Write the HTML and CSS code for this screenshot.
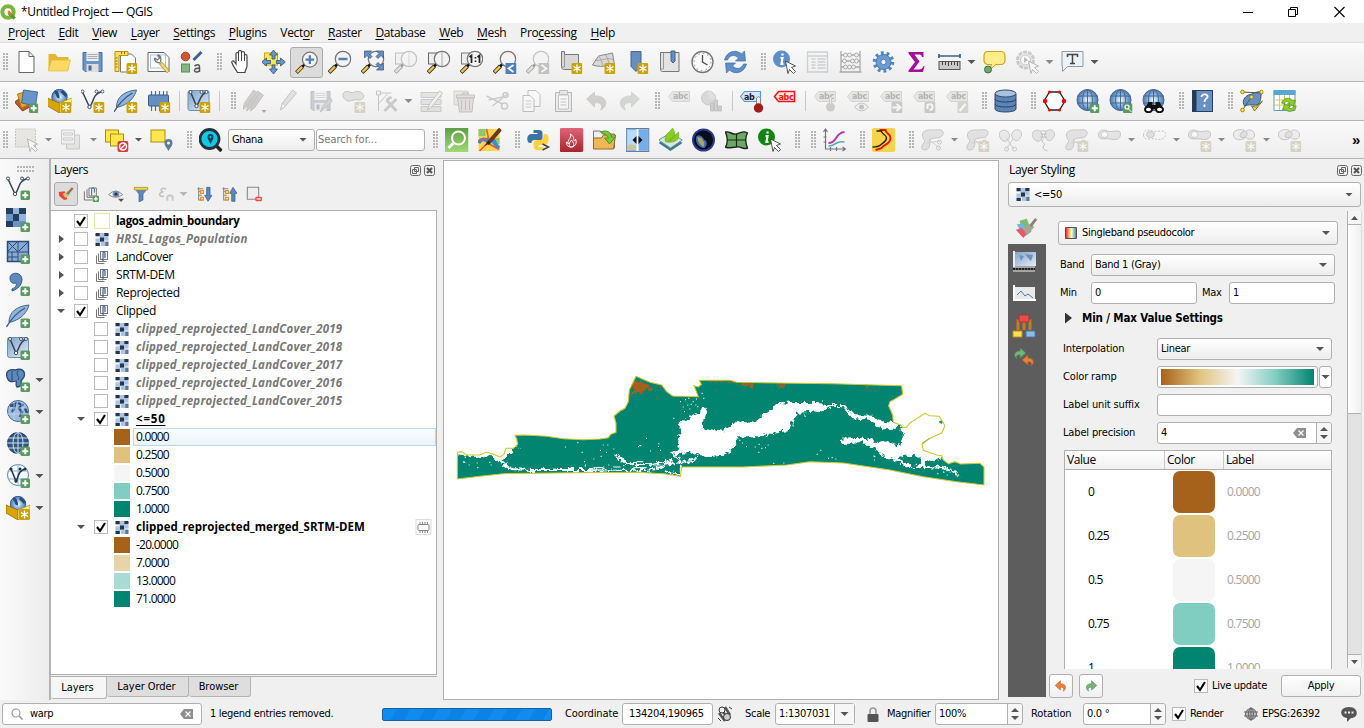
FILE: index.html
```html
<!DOCTYPE html>
<html lang="en">
<head>
<meta charset="utf-8">
<title>*Untitled Project — QGIS</title>
<link rel="stylesheet" href="styles.css">
</head>
<body>
<svg class="defs" aria-hidden="true">
<defs>
<linearGradient id="ramp5"><stop offset="0" stop-color="#d7191c"/><stop offset=".3" stop-color="#fdae61"/><stop offset=".55" stop-color="#ffffbf"/><stop offset="1" stop-color="#2b83ba"/></linearGradient>
<linearGradient id="paleblue" x2="1" y2="1"><stop offset="0" stop-color="#7da3cc"/><stop offset="1" stop-color="#e3edf8"/></linearGradient>
<linearGradient id="green" x2="0" y2="1"><stop offset="0" stop-color="#5f9f45"/><stop offset="1" stop-color="#9ed977"/></linearGradient>
<linearGradient id="red" x2="0" y2="1"><stop offset="0" stop-color="#e0647a"/><stop offset="1" stop-color="#a8262a"/></linearGradient>
<radialGradient id="ball"><stop offset="0" stop-color="#fff"/><stop offset=".5" stop-color="#8fb6de"/><stop offset="1" stop-color="#4a7ab3"/></radialGradient>
</defs>
<symbol id="star" viewBox="0 0 24 24"><rect x="13" y="13" width="11" height="11" rx="1.5" fill="#c8a30a"/><path d="M18.500 14.500v8M15 16.500l7 4M22 16.500l-7 4" stroke="#fff" stroke-width="1.300"/></symbol>
<symbol id="plus" viewBox="0 0 24 24"><rect x="14.500" y="14.500" width="9.500" height="9.500" rx="1.500" fill="#5b9a5f"/><path d="M19.250 16.300v6M16.250 19.250h6" stroke="#fff" stroke-width="1.900"/></symbol>
<symbol id="lens" viewBox="0 0 24 24"><path d="M1.500 22.500L8 16" stroke="#333" stroke-width="4"/><path d="M2 22l6-6" stroke="#f5c542" stroke-width="2.400"/><path d="M7.500 16.500l3-3" stroke="#111" stroke-width="2.500"/><circle cx="15.500" cy="9" r="7.700" fill="#f3f3f3" stroke="#777" stroke-width="1.300"/></symbol>
<symbol id="new" viewBox="0 0 24 24"><path d="M4.500 1.500h10l5 5v16h-15zM14.500 1.500v5h5" fill="#fff" stroke="#666"/></symbol>
<symbol id="open" viewBox="0 0 24 24"><path d="M1 20V4h7l2 3h11v13z" fill="#e6b735"/><path d="M1 20L4 10h19l-3 11H1z" fill="#fcd865" stroke="#e0b13a" stroke-width=".6"/></symbol>
<symbol id="save" viewBox="0 0 24 24"><path d="M2.500 2.500h19v19h-17l-2-2z" fill="#6b94c6" stroke="#4a6d99"/><rect x="6" y="2" width="12" height="9" fill="#eee"/><path d="M7 4.500h10M7 6.500h10M7 8.500h10" stroke="#aaa"/><rect x="6" y="14" width="12" height="8" fill="#ddd"/><rect x="8" y="15.500" width="3" height="5" fill="#496b96"/></symbol>
<symbol id="layout" viewBox="0 0 24 24"><path d="M7 4h11l4 4v14H7z" fill="#fff" stroke="#777"/><path d="M1.500 1.500h13v4h-9v16h-4z" fill="#ffe05a" stroke="#b9920e"/><path d="M4 8h-2M4 11h-2M4 14h-2M4 17h-2M8 4V2M11 4V2" stroke="#8d7108"/><use href="#star"/></symbol>
<symbol id="layouts" viewBox="0 0 24 24"><path d="M1.500 2.500h16l5 5v14h-21z" fill="#fff" stroke="#666"/><rect x="4" y="5" width="15" height="13" fill="none" stroke="#a9c2e8"/><path d="M14 13l8 9" stroke="#b59a3e" stroke-width="4"/><path d="M14.500 13.500l7 8" stroke="#f7dc73" stroke-width="2"/><path d="M8 8c0 4 3 5 6 5M11 5c3 0 4 3 3 7M8 8l3 2 2-2-2-3" stroke="#777" fill="#eee" stroke-width="1.300"/></symbol>
<symbol id="style" viewBox="0 0 24 24"><circle cx="6" cy="6.500" r="4.300" fill="#cf5a31" stroke="#a2401e"/><path d="M14 10l8-8" stroke="#3d6390" stroke-width="3"/><rect x="2" y="14" width="8" height="8" fill="#84b784" stroke="#5b8a5e"/><path d="M15 16q5-3 5 1v5M20 18c-6 0-6 4-3 4 2 0 3-1 3-2" fill="none" stroke="#555" stroke-width="1.500"/></symbol>
<symbol id="hand" viewBox="0 0 24 24"><path d="M7.500 14V4c0-2 2.500-2 2.500 0V2c0-2 3-2 3 0v1c0-2 3-2 3 0v3c0-2 2.500-2 2.500 0v10c0 2-2 4-2 6.500H9C7 19 5 17 3.500 13c-.8-2 1.500-3 2.500-1z" fill="#fff" stroke="#444" stroke-width="1.200"/><path d="M10 4v7M13 3v8M16 5v6" stroke="#444"/></symbol>
<symbol id="pansel" viewBox="0 0 24 24"><rect x="3" y="3" width="13" height="12" fill="#ffe64f" stroke="#c9aa13"/><path d="M12 0l4 5h-2.500v4h-3V5H8zM12 24l4-5h-2.500v-4h-3v4H8zM0 12l5-4v2.500h4v3H5V16zM24 12l-5-4v2.500h-4v3h4V16z" fill="#6c95c9" stroke="#32527c" stroke-width=".8"/></symbol>
<symbol id="zin" viewBox="0 0 24 24"><use href="#lens"/><path d="M15.500 4.500v9M11 9h9" stroke="#4f7fb7" stroke-width="2.400"/></symbol>
<symbol id="zout" viewBox="0 0 24 24"><use href="#lens"/><path d="M11 9h9" stroke="#4f7fb7" stroke-width="2.400"/></symbol>
<symbol id="zfull" viewBox="0 0 24 24"><use href="#lens"/><path d="M4 1h7L8.500 3.500l3 3-2 2-3-3L4 8zM23 1h-7l2.500 2.500-3 3 2 2 3-3L23 8zM23 20h-7l2.500-2.500-3-3 2-2 3 3L23 13z" fill="#6590c5" stroke="#315179" stroke-width=".7"/></symbol>
<symbol id="zsel" viewBox="0 0 24 24"><rect x="2" y="3" width="12" height="11" fill="#eee" stroke="#666"/><use href="#lens"/><path d="M15.500 2v14" stroke="#aaa"/></symbol>
<symbol id="zone" viewBox="0 0 24 24"><rect x="2" y="3" width="12" height="11" fill="#eee" stroke="#777"/><use href="#lens"/><path d="M10 7l2-1.500V13M18 7l2-1.500V13M16 7v1.500M16 10.500V12" stroke="#222" stroke-width="1.700" fill="none"/></symbol>
<symbol id="zlast" viewBox="0 0 24 24"><use href="#lens"/><rect x="13" y="13" width="11" height="11" fill="#4f80b7"/><path d="M21 15l-5 3.500 5 3.500" stroke="#fff" stroke-width="1.700" fill="none"/></symbol>
<symbol id="znext" viewBox="0 0 24 24"><use href="#lens"/><rect x="13" y="13" width="11" height="11" fill="#777"/><path d="M16 15l5 3.500-5 3.500" stroke="#fff" stroke-width="1.700" fill="none"/></symbol>
<symbol id="view" viewBox="0 0 24 24"><path d="M3 1.500h3v3h14v15H6c-2 0-3-1-3-3z" fill="#d8d8d8" stroke="#777"/><path d="M6 4v13H3" fill="none" stroke="#999"/><use href="#star"/></symbol>
<symbol id="view3" viewBox="0 0 24 24"><path d="M1 15L7 6l14-3 2 12c-5-2-9 4-22 0z" fill="#d8d8d8" stroke="#888"/><path d="M7 6c4 5 3 8 5 10M14 5c3 3 2 6 4 9M4 10c5 2 13-4 18 0" fill="none" stroke="#aaa"/><use href="#star"/></symbol>
<symbol id="mark" viewBox="0 0 24 24"><path d="M6.500 1.500h10v15l-5 5-5-5z" fill="#668fc0" stroke="#41658f"/><use href="#star"/></symbol>
<symbol id="marks" viewBox="0 0 24 24"><path d="M3 2.500h18.500v19H5c-1.500 0-2-1-2-2z" fill="#e3e3e3" stroke="#777"/><path d="M6 3v16H3" fill="none" stroke="#999"/><path d="M13.500 1h4v10l-2 2-2-2z" fill="#668fc0" stroke="#41658f"/></symbol>
<symbol id="clock" viewBox="0 0 24 24"><circle cx="12" cy="12" r="10.500" fill="#fafafa" stroke="#777" stroke-width="1.400"/><circle cx="12" cy="12" r="8.500" fill="none" stroke="#888" stroke-dasharray="1.500 2.950"/><path d="M12 5v7l5 3" fill="none" stroke="#555" stroke-width="1.400"/></symbol>
<symbol id="refresh" viewBox="0 0 24 24"><path d="M1 10C3 1 13-1 18 4l3-3 1 10H12l3-3C11 4 6 5 4 10zM23 14c-2 9-12 11-17 6l-3 3-1-10h10l-3 3c4 4 9 3 11-2z" fill="#5d8fcb" stroke="#3d6ba4" stroke-width=".7"/></symbol>
<symbol id="cursor" viewBox="0 0 24 24"><path d="M13 11l10 5-4 1.500 4 4-2 2-4-4-1.500 4z" fill="#fff" stroke="#444" stroke-width=".9"/></symbol>
<symbol id="ident" viewBox="0 0 24 24"><circle cx="9" cy="9" r="8.500" fill="#5f8fc9"/><path d="M10 3.500v2M8 8h2l-1 6h2" stroke="#fff" stroke-width="2.200" fill="none"/><use href="#cursor"/></symbol>
<symbol id="gident" viewBox="0 0 24 24"><circle cx="9" cy="9" r="8.500" fill="#108510"/><path d="M10 3.500v2M8 8h2l-1 6h2" stroke="#fff" stroke-width="2.200" fill="none"/><use href="#cursor"/></symbol>
<symbol id="attr" viewBox="0 0 24 24"><path d="M2 2h20v20H2zM2 6h20M6 9h4M12 9h8M6 12h4M12 12h8M6 15h4M12 15h8M6 18h4M12 18h8" fill="#eef3f8" stroke="#8194a8" stroke-width="1.300"/></symbol>
<symbol id="abacus" viewBox="0 0 24 24"><path d="M2.500 1v21M21.500 1v21M2 5h20M2 11h20M2 17h20M1 22h22" fill="none" stroke="#777" stroke-width="1.300"/><g fill="#eee" stroke="#777"><circle cx="7" cy="5" r="2"/><circle cx="11" cy="5" r="2"/><circle cx="18" cy="5" r="2"/><circle cx="6" cy="11" r="2"/><circle cx="14" cy="11" r="2"/><circle cx="18" cy="11" r="2"/><circle cx="7" cy="17" r="2"/><circle cx="11" cy="17" r="2"/><circle cx="15" cy="17" r="2"/></g></symbol>
<symbol id="gear" viewBox="0 0 24 24"><circle cx="12" cy="12" r="8.800" fill="none" stroke="#5384bd" stroke-width="4" stroke-dasharray="2.700 2.830"/><circle cx="12" cy="12" r="7.500" fill="#6e9bd3" stroke="#4778b1"/><circle cx="12" cy="12" r="2.700" fill="#f5f5f5" stroke="#4778b1"/></symbol>
<symbol id="sigma" viewBox="0 0 24 24"><path d="M4 2h15v5h-1.500c-.5-2-1.500-2.500-4-2.500H10l5 7-6 8h5c3 0 4-1 5-3.500h1L18.500 22H4v-1.500L10.500 12 4 3.500z" fill="#a3119c"/></symbol>
<symbol id="measure" viewBox="0 0 24 24"><path d="M2 6h20M1.500 4v4M22.500 4v4" stroke="#3f6086" stroke-width="1.700"/><rect x="1.500" y="11.500" width="21" height="8" fill="#c9c9c9" stroke="#555"/><path d="M5 12v3M8 12v3M11 12v4M14 12v3M17 12v3M20 12v4" stroke="#444"/></symbol>
<symbol id="tip" viewBox="0 0 24 24"><rect x="1.500" y="1.500" width="21" height="13" rx="4" fill="#ffee89" stroke="#c9a51b" stroke-width="1.200"/><path d="M9 14l-2 6 7-6" fill="#ffee89" stroke="#c9a51b"/><circle cx="5.500" cy="19.500" r="3.500" fill="#70a774" stroke="#3d7141"/></symbol>
<symbol id="action" viewBox="0 0 24 24"><circle cx="10" cy="10" r="8" fill="#ddd" stroke="#888" stroke-width="3" stroke-dasharray="4 1"/><circle cx="10" cy="10" r="5" fill="#fff" stroke="#777"/><path d="M8.500 7v6l4-3z" fill="#666"/><use href="#cursor"/></symbol>
<symbol id="text" viewBox="0 0 24 24"><path d="M1.500 1.500h21v15H7l-5 5v-5h-.5z" fill="#edf2f8" stroke="#8d99a5"/><path d="M7 7V4.500h10V7M12 4.500v9M9.500 13.500h5" fill="none" stroke="#444" stroke-width="1.500"/></symbol>
<symbol id="dsm" viewBox="0 0 24 24"><path d="M0 13l9-6 8 10-9 5z" fill="#bb5a2b" stroke="#86401d"/><path d="M3 5l11-3 4 12-11 5z" fill="#eba92c" stroke="#ad7812"/><path d="M9 1l14 2-2 14-14-3z" fill="#6794c9" stroke="#456b99"/><use href="#plus"/></symbol>
<symbol id="gpkg" viewBox="0 0 24 24"><circle cx="12" cy="8" r="7.700" fill="url(#ball)" stroke="#385f90"/><path d="M7 3c5 0 1 5 5 5M14 2l5 5" stroke="#274d80" stroke-width="3" fill="none"/><path d="M0 9l12 5v10L0 17z" fill="#d9a506" stroke="#826200" stroke-width=".7"/><path d="M12 14l12-5v8l-12 7z" fill="#ffee6b" stroke="#a48818" stroke-width=".7"/></symbol>
<symbol id="gpkgn" viewBox="0 0 24 24"><use href="#gpkg"/><use href="#star"/></symbol>
<symbol id="vee" viewBox="0 0 24 24"><path d="M2 3l7 15C14 13 11 6 21 2.500" fill="none" stroke="#345" stroke-width="1.500"/><g fill="#fff" stroke="#456"><circle cx="2" cy="2.500" r="1.500"/><circle cx="16" cy="2.500" r="1.500"/><circle cx="22" cy="2.500" r="1.500"/><circle cx="9" cy="18" r="1.700"/></g></symbol>
<symbol id="shpn" viewBox="0 0 24 24"><use href="#vee"/><use href="#star"/></symbol>
<symbol id="shpa" viewBox="0 0 24 24"><use href="#vee"/><use href="#plus"/></symbol>
<symbol id="feather" viewBox="0 0 24 24"><path d="M3 18C3 8 11 2 23 1c-2 7-7 14-18 17z" fill="#91b4da" stroke="#45688f"/><path d="M.5 23C5 15 10 9 19 4" fill="none" stroke="#355c87" stroke-width="1.300"/></symbol>
<symbol id="fean" viewBox="0 0 24 24"><use href="#feather"/><use href="#star"/></symbol>
<symbol id="feaa" viewBox="0 0 24 24"><use href="#feather"/><use href="#plus"/></symbol>
<symbol id="chip" viewBox="0 0 24 24"><path d="M5 2v20M9 2v20M13 2v20M17 2v12M20.500 2v12" stroke="#4d6f98" stroke-width="1.200"/><rect x="2" y="6" width="20" height="11" rx="1" fill="#658fc2" stroke="#395e8c"/><use href="#star"/></symbol>
<symbol id="virt" viewBox="0 0 24 24"><rect x="1.500" y="1.500" width="21" height="20" rx="2" fill="url(#paleblue)" stroke="#6c8db1"/><path d="M4 3l6 14C14 12 13 6 20 3" fill="none" stroke="#345" stroke-width="1.500"/><g fill="#fff" stroke="#456"><circle cx="4" cy="3" r="1.500"/><circle cx="15" cy="3" r="1.500"/><circle cx="20" cy="3" r="1.500"/><circle cx="10" cy="17" r="1.700"/></g></symbol>
<symbol id="virtn" viewBox="0 0 24 24"><use href="#virt"/><use href="#star"/></symbol>
<symbol id="virta" viewBox="0 0 24 24"><use href="#virt"/><use href="#plus"/></symbol>
<symbol id="pencil" viewBox="0 0 24 24"><path d="M5 21l2-7L17 1l4 3L10 17z" fill="#c9bfab" stroke="#777"/><path d="M5 21l2-7 3 3z" fill="#fff" stroke="#777"/></symbol>
<symbol id="pencils" viewBox="0 0 24 24"><path d="M0 21l2-7L11 1l4 3L5 17z" fill="#a98780" stroke="#777"/><path d="M4 22l2-7L15 2l4 3L9 18z" fill="#a98780" stroke="#777"/><path d="M8 22l1-6L17 4l4 2-9 13z" fill="#a98780" stroke="#777"/><path d="M19 21h5l-2.500 3z" fill="#333"/></symbol>
<symbol id="savee" viewBox="0 0 24 24"><use href="#save"/><path d="M12 23l2-6 8-8 2 3z" fill="#c99" stroke="#777"/></symbol>
<symbol id="blob" viewBox="0 0 24 24"><path d="M3 10C-1 5 3 1 8 3c4 2 6-2 11 0 6 3 3 8-2 8-5-2-9 4-14-1z" fill="#b9c6ad" stroke="#777"/></symbol>
<symbol id="addpoly" viewBox="0 0 24 24"><use href="#blob"/><use href="#star"/></symbol>
<symbol id="vertex" viewBox="0 0 24 24"><path d="M4 22V4h13M4 15L13 5" fill="none" stroke="#777"/><path d="M2 2h4v4H2z" fill="#eee" stroke="#777"/><path d="M10 22L22 10M12 11l10 11M12 11l5-3" stroke="#888" stroke-width="3"/></symbol>
<symbol id="modify" viewBox="0 0 24 24"><path d="M1.500 3.500h20v5h-20zM1.500 10.500h20v5h-20zM1.500 17.500h20v5h-20z" fill="#cfcb9f" stroke="#888"/><path d="M8 21l2-6L20 2l3 2L12 18z" fill="#eee" stroke="#777"/></symbol>
<symbol id="bin" viewBox="0 0 24 24"><path d="M1.500 2h14v14h-14z" fill="#ddd0ad" stroke="#999"/><path d="M5 9h16l-1.500 14H7zM4 6h18v3H4zM10 6V4h6v2M9 11v10M13 11v10M17 11v10" fill="#d7b7b7" stroke="#966"/></symbol>
<symbol id="cut" viewBox="0 0 24 24"><path d="M1 7l16 8M7 17L22 5M3 11L17 8" stroke="#888" stroke-width="1.500"/><circle cx="19" cy="17" r="3" fill="none" stroke="#888" stroke-width="1.600"/><circle cx="20" cy="6" r="2.500" fill="none" stroke="#888" stroke-width="1.600"/></symbol>
<symbol id="copy" viewBox="0 0 24 24"><path d="M9.500 1.500h8l4 4v12h-12z" fill="#fff" stroke="#666"/><path d="M4.500 6.500h7l4 4v12h-11z" fill="#fff" stroke="#666"/><path d="M7 12h6M7 15h6M7 18h6" stroke="#888"/></symbol>
<symbol id="paste" viewBox="0 0 24 24"><path d="M4 3.500h16v19H4z" fill="#ddd" stroke="#555"/><path d="M7 6h10v14H7z" fill="#fff" stroke="#777"/><path d="M8 1.500h8v4H8z" fill="#ccc" stroke="#666"/><path d="M9 10h6M9 13h6M9 16h6" stroke="#777"/></symbol>
<symbol id="undo" viewBox="0 0 24 24"><path d="M2 10l8-7v4c12-1 15 10 6 14 3-5 0-8-6-7v4z" fill="#a8918a" stroke="#8c746c" stroke-width=".7"/></symbol>
<symbol id="redo" viewBox="0 0 24 24"><path d="M22 10l-8-7v4C2 6-1 17 8 21c-3-5 0-8 6-7v4z" fill="#99aa9a" stroke="#81908a" stroke-width=".7"/></symbol>
<symbol id="tag" viewBox="0 0 24 24"><path d="M6 2.500h17v10H6l-4-5z" fill="#cfceb2" stroke="#a4a388"/><text x="6.500" y="10" class="abc" fill="#444">abc</text></symbol>
<symbol id="tagp" viewBox="0 0 24 24"><use href="#tag"/><circle cx="18" cy="18" r="4.500" fill="#a88"/><path d="M17 8v8h2V8" stroke="#888" fill="#ddd"/></symbol>
<symbol id="tage" viewBox="0 0 24 24"><use href="#tag"/><path d="M9 18q7-8 14 0q-7 8-14 0z" fill="#eee" stroke="#777"/><circle cx="16" cy="18" r="2.500" fill="#777"/></symbol>
<symbol id="tagm" viewBox="0 0 24 24"><use href="#tag"/><rect x="13" y="13" width="11" height="11" rx="1" fill="#888"/><path d="M14 18.500h6M18 15l4 3.500-4 3.500" stroke="#fff" stroke-width="2" fill="none"/></symbol>
<symbol id="tagr" viewBox="0 0 24 24"><use href="#tag"/><rect x="13" y="13" width="11" height="11" rx="1" fill="#888"/><path d="M16 20v-4q5-2 5 2 0 3-3 3" stroke="#fff" stroke-width="2" fill="none"/></symbol>
<symbol id="tagc" viewBox="0 0 24 24"><use href="#tag"/><rect x="13" y="13" width="11" height="11" rx="1" fill="#aaa586"/><path d="M15 22l6-7" stroke="#fff" stroke-width="2.200"/></symbol>
<symbol id="tagb" viewBox="0 0 24 24"><path d="M5 2.500h16v10H5l-4-5z" fill="#d6e7fb" stroke="#4f98eb" stroke-width="1.200"/><text x="4.500" y="10.500" class="abc" fill="#222">ab</text><path d="M17 9v8h4V9q-2-3-4 0" fill="#eee" stroke="#888"/><circle cx="19" cy="19" r="4.700" fill="#a11b1b"/></symbol>
<symbol id="tagred" viewBox="0 0 24 24"><path d="M6 2.500h16v10H6l-4-5z" fill="#ffe7e7" stroke="#ef1515" stroke-width="1.600"/><text x="6" y="10.500" class="abc" fill="#e11">abc</text></symbol>
<symbol id="diag" viewBox="0 0 24 24"><circle cx="9" cy="9" r="7" fill="#b4a9a9" stroke="#888"/><path d="M9 9V2a7 7 0 0 1 6 9z" fill="#a9c5ad"/><path d="M11 14h3v8h-3zM15 11h3v11h-3zM19 17h3v5h-3z" fill="#999" stroke="#777"/></symbol>
<symbol id="db" viewBox="0 0 24 24"><path d="M1.500 5v15c0 4 21 4 21 0V5z" fill="#5c84b6" stroke="#30496a"/><ellipse cx="12" cy="4.500" rx="10.500" ry="3.500" fill="#a8c1e0" stroke="#30496a"/><path d="M1.500 10c0 4 21 4 21 0M1.500 15c0 4 21 4 21 0" fill="none" stroke="#263f60"/></symbol>
<symbol id="hex" viewBox="0 0 24 24"><path d="M7 3h10l5.500 9-5.500 9H7l-5.500-9z" fill="#fff" stroke="#222" stroke-width="1.300"/><g fill="#f00"><circle cx="7" cy="3" r="1.500"/><circle cx="17" cy="3" r="1.500"/><circle cx="21.500" cy="12" r="2.300"/><circle cx="17" cy="21" r="1.500"/><circle cx="7" cy="21" r="1.500"/><circle cx="2.500" cy="12" r="2.300"/></g></symbol>
<symbol id="globe" viewBox="0 0 24 24"><circle cx="12" cy="11" r="10.500" fill="url(#ball)" stroke="#47698f"/><ellipse cx="12" cy="11" rx="5" ry="10.500" fill="none" stroke="#47698f"/><path d="M12 0v22M2 7h20M1.500 14h21" stroke="#47698f"/></symbol>
<symbol id="globep" viewBox="0 0 24 24"><use href="#globe"/><use href="#plus"/></symbol>
<symbol id="globes" viewBox="0 0 24 24"><use href="#globe"/><rect x="14.500" y="14.500" width="9.500" height="9.500" rx="1" fill="#5b9a5f"/><circle cx="18.500" cy="18" r="2" fill="none" stroke="#fff" stroke-width="1.200"/><path d="M20 20l3 3" stroke="#fff"/></symbol>
<symbol id="binoc" viewBox="0 0 24 24"><use href="#globe"/><path d="M3 20l4-7h4v3h3v-3h4l4 7z" fill="#111"/><ellipse cx="7" cy="20.500" rx="3.500" ry="2.700" fill="#fff" stroke="#111" stroke-width="2"/><ellipse cx="18" cy="20.500" rx="3.500" ry="2.700" fill="#fff" stroke="#111" stroke-width="2"/></symbol>
<symbol id="help" viewBox="0 0 24 24"><rect x="2" y="1.500" width="20" height="21" fill="#6891c3" stroke="#28405d"/><path d="M2 2h4v20H2z" fill="#263a54"/><path d="M11 8c0-4 7-3 6 0-1 2-3 2-3 5M14 15.500v2.500" fill="none" stroke="#fff" stroke-width="1.800"/></symbol>
<symbol id="topo" viewBox="0 0 24 24"><path d="M5 17c-3-5 0-9 4-11 5-1 8-4 13-3-1 4 0 8-3 12-4 3-7-1-14 2z" fill="#6790c1" stroke="#36577e"/><path d="M2 3l20 1M3 21L12 8" stroke="#555"/><g fill="#ffe84d" stroke="#9c8613"><circle cx="3" cy="3" r="1.800"/><circle cx="22" cy="3" r="1.800"/><circle cx="12" cy="8" r="1.800"/><circle cx="3" cy="21" r="1.800"/></g><path d="M12 17l3 5 8-10-7 6z" fill="#ffd83d" stroke="#695a13" stroke-width=".8"/></symbol>
<symbol id="tabler" viewBox="0 0 24 24"><path d="M1.500 1.500h21v20h-21z" fill="#fff" stroke="#629ac1"/><path d="M1 1h22v5H1z" fill="#5aa6d1"/><path d="M2 11h20M2 16h20M7 6v15M12 6v15M17 6v15" stroke="#e4bf64"/><path d="M9 14c2-6 9-6 11-2l3-1-2 6-6-2 2-1c-3-3-5-1-5 1zM24 17c-2 6-9 7-11 3l-3 1 2-6 6 2-2 1c2 3 5 1 5-1z" fill="#89cf26" stroke="#4f9112" stroke-width=".7"/></symbol>
<symbol id="selrect" viewBox="0 0 24 24"><rect x="1" y="1" width="20" height="18" fill="#d2d0ac" stroke="#777" stroke-dasharray="2 1"/><use href="#cursor"/></symbol>
<symbol id="forms" viewBox="0 0 24 24"><path d="M7 7h13v14H7z" fill="#d2d0ac" stroke="#888"/><path d="M2 2h13v14H2z" fill="#e8e8e8" stroke="#888"/><path d="M4 5h9v2H4zM4 10h9v2H4z" fill="#fff" stroke="#888"/></symbol>
<symbol id="desel" viewBox="0 0 24 24"><rect x="1" y="2" width="13" height="12" fill="#ffe74d" stroke="#ac8d0b"/><rect x="6" y="6" width="13" height="12" fill="#ffe74d" stroke="#ac8d0b"/><rect x="13" y="13" width="11" height="11" rx="2" fill="#de393e"/><circle cx="18.500" cy="18.500" r="3.500" fill="none" stroke="#fff" stroke-width="1.500"/><path d="M16 21l5-5" stroke="#fff" stroke-width="1.500"/></symbol>
<symbol id="selloc" viewBox="0 0 24 24"><rect x="1.500" y="2" width="14" height="12" fill="#ffe74d" stroke="#ac8d0b"/><path d="M19 23c-2-4-4-5-4-8a4 4 0 0 1 8 0c0 3-2 4-4 8z" fill="#5a7e95"/><circle cx="19" cy="15" r="1.500" fill="#fff"/></symbol>
<symbol id="osm" viewBox="0 0 24 24"><path d="M17 17l6 6" stroke="#222" stroke-width="3.500"/><circle cx="11" cy="11" r="9.500" fill="#0ccbe3" stroke="#26313b" stroke-width="2.800"/><path d="M12 16c-2-4-3-5-3-7a3 3 0 0 1 6 0c0 2-1 3-3 7z" fill="#17445a"/><circle cx="12" cy="9" r="1" fill="#1cd"/></symbol>
<symbol id="gsearch" viewBox="0 0 24 24"><path d="M0 0h24v24H0z" fill="url(#green)"/><circle cx="14" cy="10" r="6.500" fill="none" stroke="#fff" stroke-width="2"/><path d="M9 15l-5 5" stroke="#fff" stroke-width="3"/></symbol>
<symbol id="osmap" viewBox="0 0 24 24"><path d="M1 1h21v22H1z" fill="#ffd34b"/><path d="M1 1h7v7H1zM14 10h8v6h-8z" fill="#8dc86d"/><path d="M1 15c5-8 8 0 12-3s4 7 9 8" fill="none" stroke="#328ee3" stroke-width="4"/><path d="M9 1l2 9-10 3M2 23l8-8 11 6" fill="none" stroke="#e3573c" stroke-width="1.500"/><path d="M10 16L23 1" stroke="#71351b" stroke-width="4"/><path d="M7 18l4-5 2 2z" fill="#222"/></symbol>
<symbol id="py" viewBox="0 0 24 24"><path d="M7 2h5q4 0 4 3v5q0 2-3 2H8q-3 0-3 3H3q-3-1-2-6 1-3 4-3h6V5H7z" fill="#3b73a5"/><path d="M17 6h2q3 0 3 5 0 6-4 6h-6v2h5v1q-1 3-6 2-4 0-4-4v-3q0-3 4-3h3q3 0 3-3z" fill="#ffd13e"/><path d="M16 16l6 3-6 3" fill="none" stroke="#444" stroke-width="1.500"/></symbol>
<symbol id="fire" viewBox="0 0 24 24"><rect width="24" height="24" rx="2" fill="url(#red)"/><path d="M11 6c5 4 2 5 4 7 1-1 1-2 1-2 4 9-10 11-9 3l2 2c-2-4 3-5 2-10zM12 12c-4 5-2 7 0 7s4-2 0-7" fill="none" stroke="#fff"/></symbol>
<symbol id="imp" viewBox="0 0 24 24"><path d="M1 20V3h7l2 3h12v14z" fill="#eee" stroke="#777"/><path d="M1 21V10h8l2-3h12l-2 14z" fill="#eeb856" stroke="#966626"/><path d="M8 4c7-3 11 1 11 5h4l-6 7-5-6h4c-1-3-4-4-8-6z" fill="#72cb32" stroke="#3f8819" stroke-width=".8"/></symbol>
<symbol id="swipe" viewBox="0 0 24 24"><rect x=".5" y=".5" width="23" height="23" fill="#87b7e7" stroke="#667e96"/><path d="M2 2h9v20H2z" fill="#b8dcf5"/><path d="M13 2h9v20h-9z" fill="#77adec"/><path d="M2 18c5-4 4 0 9-1v5H2z" fill="#c8c59c"/><path d="M12 1v22" stroke="#fff" stroke-width="2"/><path d="M7 12l4-4v8zM17 12l-4-4v8z" fill="#111"/></symbol>
<symbol id="leaf" viewBox="0 0 24 24"><path d="M0 15l12 8 12-8-12-7z" fill="#3c7a8b"/><path d="M0 12l12 8 12-8-12-7z" fill="#d7e7e2" stroke="#67949a"/><path d="M7 14C5 6 11 5 14 0c4 6 3 11-4 13L20 4c2 8-4 11-11 10z" fill="#8acc26" stroke="#69a919" stroke-width=".6"/></symbol>
<symbol id="earth" viewBox="0 0 24 24"><circle cx="12" cy="12" r="11.500" fill="#2b3a8c"/><circle cx="12" cy="12" r="9.500" fill="#080d1c"/><path d="M5 8c4-2 6 1 8 4 3 1 3 5 0 8-6 0-10-6-8-12z" fill="#386eab"/><path d="M6 9l4 1 3 5-1 4c-3-2-6-5-6-10z" fill="#b0a468"/></symbol>
<symbol id="poly" viewBox="0 0 24 24"><path d="M1 4c5-1 6 3 11 2s6-4 11-1c-3 5-2 10 0 15-5 2-6-2-11-1-5 0-7 2-11 0 3-5 2-10 0-15z" fill="#69ac61" stroke="#222" stroke-width="1.400"/><path d="M3 12h18M12 6v13" stroke="#222" stroke-width="1.200"/></symbol>
<symbol id="plot" viewBox="0 0 24 24"><path d="M3 1v20h20M1 4l2-3 2 3M20 19l3 2-3 2M1 9h3M1 14h3M8 19v4M14 19v4" fill="none" stroke="#777" stroke-width="1.200"/><path d="M6 15c9 0 6-10 16-11" fill="none" stroke="#b63aaa" stroke-width="2"/><path d="M6 18c8 0 7-6 16-4" fill="none" stroke="#57a8b4" stroke-width="1.600"/></symbol>
<symbol id="river" viewBox="0 0 24 24"><rect width="24" height="24" rx="3" fill="#f5d34b"/><path d="M8 2h6c0 4 5 3 5 8 0 5-4 6-7 8-2 3-4 3-8 4" fill="none" stroke="#e81410" stroke-width="2"/><path d="M5 3h5c0 4 5 3 5 7 0 4-4 5-6 7-2 2-4 2-8 2" fill="none" stroke="#221" stroke-width="1.400"/></symbol>
<symbol id="split" viewBox="0 0 24 24"><path d="M2 7c0-6 9-5 13-5 8-2 10 4 5 7-6 2-10 0-11 4 1 5-1 9-5 9-5-1-2-5 0-8 1-3-2-2-2-7z" fill="#bec5bb" stroke="#777"/><path d="M6 15l14-2M8 11l11 9" stroke="#999"/><circle cx="19" cy="14" r="2" fill="none" stroke="#a77"/><circle cx="18" cy="20" r="2" fill="none" stroke="#a77"/></symbol>
<symbol id="splitn" viewBox="0 0 24 24"><use href="#split"/><use href="#star"/></symbol>
<symbol id="bow" viewBox="0 0 24 24"><path d="M11 7C9-1-1 2 1 8c2 7 9 7 10 0zM13 7c2-8 11-6 10 0-2 7-8 8-10 0z" fill="#d4d8d1" stroke="#777"/><path d="M8 10l7 11M15 10L8 21" stroke="#888"/><circle cx="8" cy="21" r="2" fill="none" stroke="#888"/><circle cx="16" cy="21" r="2" fill="none" stroke="#888"/></symbol>
<symbol id="stitch" viewBox="0 0 24 24"><path d="M11 7C9-1-1 2 1 8c2 7 9 7 10 0zM13 7c2-8 11-6 10 0-2 7-8 8-10 0z" fill="#c4c8c1" stroke="#777"/><path d="M9 3h6M9 6h6M9 9h6M12 11c-5 3 4 4 0 7-2 3 2 4 4 5" stroke="#666" fill="none"/></symbol>
<symbol id="shape" viewBox="0 0 24 24"><path d="M1 7C1 2 6 1 10 3s13-3 13 3-6 6-10 5-12 2-12-4z" fill="#c5cac1" stroke="#777"/><ellipse cx="7" cy="6.500" rx="3.500" ry="3" fill="#fff" stroke="#888"/></symbol>
<symbol id="shaped" viewBox="0 0 24 24"><path d="M1 7C1 2 6 1 10 3s13-3 13 3-6 6-10 5-12 2-12-4z" fill="none" stroke="#777" stroke-dasharray="2 1.500"/><ellipse cx="8" cy="6.500" rx="4" ry="3" fill="#bbc0b8" stroke="#777"/></symbol>
<symbol id="shapen" viewBox="0 0 24 24"><use href="#shape"/><use href="#star"/></symbol>
<symbol id="pair" viewBox="0 0 24 24"><path d="M1 6c0-5 11-6 12-2 2-4 10-2 9 4-1 4-7 4-9 1-2 4-13 4-12-3z" fill="#dddfe0" stroke="#777"/><path d="M8 9c-2-4 4-7 6-5 2 3-1 7-6 5z" fill="#b8bcbc" stroke="#777"/><use href="#star"/></symbol>
<symbol id="q" viewBox="0 0 24 24"><circle cx="12" cy="12" r="8.500" fill="none" stroke="#7db53b" stroke-width="6"/><path d="M13 13l9 9" stroke="#5a992c" stroke-width="5"/><path d="M11 10h4v4z" fill="#ed7a37"/><path d="M12 11l5 5" stroke="#ed7a37" stroke-width="3"/></symbol>
<symbol id="rasta" viewBox="0 0 24 24"><path d="M0 0h20v19H0z" fill="#6a93c6"/><path d="M0 0h7v6H0zM13 0h7v6h-7zM7 6h6v7H7zM0 13h7v6H0z" fill="#253e60"/><path d="M7 0h6v6H7zM13 6h7v7h-7z" fill="#94b3da"/><use href="#plus"/></symbol>
<symbol id="mesh" viewBox="0 0 24 24"><path d="M1.500 1.500h21v20h-21z" fill="#87a9d3" stroke="#2d4e78" stroke-width="1.500"/><path d="M12 1v21M1 12h22M1 1l11 11M13 11L22 2M1 12L12 1M6 12v10M1 17h11" stroke="#2d4e78" fill="none"/><use href="#plus"/></symbol>
<symbol id="comma" viewBox="0 0 24 24"><path d="M4 6c0-6 11-7 12 1 0 6-4 10-10 12v-2c4-2 5-4 4-6-4 1-6-1-6-5z" fill="#5d89bd" stroke="#355c8b"/><use href="#plus"/></symbol>
<symbol id="eleph" viewBox="0 0 24 24"><path d="M1 9C-1 2 5 1 9 2c6-2 11 0 9 7l-3 4c1 4-1 6-4 6-2-2 0-5-1-6-7 2-8-1-9-4z" fill="#5d89bd" stroke="#264a74" stroke-width="1.300"/><path d="M6 3v10M12 3c-3 5 3 5 0 9" fill="none" stroke="#264a74"/><use href="#plus"/></symbol>
<symbol id="spat" viewBox="0 0 24 24"><circle cx="12" cy="11" r="10.500" fill="#9dbce0" stroke="#48698f"/><path d="M4 6l5-2-1 5-2 3M12 3l4 2-3 3 3 4-2 5M19 8l2 5" fill="none" stroke="#31547c" stroke-width="2.500"/><path d="M3 8h18M2 14h20M8 2v18M16 2v18" stroke="#c8daf0" stroke-width=".7"/><use href="#plus"/></symbol>
<symbol id="wms" viewBox="0 0 24 24"><circle cx="12" cy="11" r="10.500" fill="#31577f" stroke="#203a5b"/><ellipse cx="12" cy="11" rx="5" ry="10.500" fill="none" stroke="#cfe0f3"/><path d="M12 0v22M2 6h20M1 11h22M2 16h20" stroke="#cfe0f3"/><use href="#plus"/></symbol>
<symbol id="wfs" viewBox="0 0 24 24"><circle cx="12" cy="11" r="10.500" fill="#f7faff" stroke="#5a86b5"/><path d="M12 0v22M2 7h20M2 15h20" stroke="#8cb0d5"/><path d="M5 5l5 12C13 12 12 7 19 5" fill="none" stroke="#234" stroke-width="1.500"/><g fill="#234"><circle cx="5" cy="5" r="1.500"/><circle cx="14" cy="5" r="1.500"/><circle cx="19" cy="5" r="1.500"/><circle cx="10" cy="17" r="1.700"/></g><use href="#plus"/></symbol>
<symbol id="rast" viewBox="0 0 12 12"><path d="M0 0h12v12H0z" fill="#f0f4fa"/><path d="M0 0h4v3H0zM8 0h4v3H8zM4 4h4v4H4zM0 9h4v3H0z" fill="#26354d"/><path d="M4 0h4v4H4zM8 3h4v4H8zM0 5h4v4H0zM5 8h4v4H5z" fill="#a9c4e4"/><path d="M9 8h3v4H9z" fill="#5d769a"/></symbol>
<symbol id="group" viewBox="0 0 14 15"><path d="M1.500 5.500v8h8M3.500 3.500v8h8" fill="none" stroke="#777"/><rect x="5.500" y="1.500" width="7" height="8" fill="#f5f5f5" stroke="#777"/><path d="M8 11V3q1-2 2 0v5" fill="none" stroke="#3c5f91" stroke-width="1.200"/></symbol>
<symbol id="brush" viewBox="0 0 24 24"><path d="M1 9l9-1 4 12-5 1-7-6z" fill="#e8433b"/><path d="M7 12l8-5 4 5-8 6z" fill="#f6c23d"/><path d="M11 12l4 4 2-3-4-4z" fill="#8ec4e6"/><path d="M14 12l8-9" stroke="#9a7240" stroke-width="3.500"/></symbol>
<symbol id="brush2" viewBox="0 0 24 24"><path d="M5 4l8-2 5 14-9 6z" fill="#7cba76"/><path d="M2 8l7-1 5 10-5 5z" fill="#73b6dc"/><path d="M1 14l6-2 7 5-5 6z" fill="#e55a72"/><path d="M9 13l8-6 4 4-8 9z" fill="#aaa58c"/><path d="M17 10l6-8" stroke="#8a856e" stroke-width="3"/></symbol>
<symbol id="eye" viewBox="0 0 24 24"><path d="M1 13Q11 2 22 13Q11 21 1 13z" fill="#eee" stroke="#888" stroke-width="1.400"/><circle cx="12" cy="12" r="5" fill="#7393b5"/><circle cx="12" cy="12" r="2.300" fill="#234"/><path d="M15 19h9l-4.500 5z" fill="#555"/></symbol>
<symbol id="filter" viewBox="0 0 24 24"><path d="M2 3h20l-7 9v9l-6 3V12z" fill="#5d88bc" stroke="#3b618f"/><path d="M2 2h20v4H2z" fill="#f3d746" stroke="#a58b1b"/></symbol>
<symbol id="eps" viewBox="0 0 24 24"><path d="M12 5C5 0 2 8 8 9 0 9 1 18 9 15" fill="none" stroke="#777" stroke-width="2.500"/><path d="M14 22v-6q4-4 8 0v6" fill="none" stroke="#888" stroke-width="3"/></symbol>
<symbol id="expand" viewBox="0 0 24 24"><path d="M4 2v19h5M4 8h5M4 14h5M2 4h9" fill="none" stroke="#888" stroke-width="1.600"/><path d="M7 7h4v4H7zM7 17h4v4H7z" fill="#fff" stroke="#e89127" stroke-width="2"/><path d="M16 2h5v12h3l-6 9-5-9h3z" fill="#5a88c0" stroke="#315480"/></symbol>
<symbol id="collapse" viewBox="0 0 24 24"><path d="M4 2v19h5M4 8h5M4 14h5M2 4h9" fill="none" stroke="#888" stroke-width="1.600"/><path d="M7 7h4v4H7zM7 17h4v4H7z" fill="#fff" stroke="#e89127" stroke-width="2"/><path d="M16 23h5V11h3l-6-9-5 9h3z" fill="#5a88c0" stroke="#315480"/></symbol>
<symbol id="addgrp" viewBox="0 0 24 24"><path d="M2 8v13h12M6 5v12h12" fill="none" stroke="#777" stroke-width="1.500"/><path d="M9 3h11v12H9z" fill="#f4f4f4" stroke="#777" stroke-width="1.500"/><path d="M13 14V4q2-3 4 0v6" fill="none" stroke="#3c5f91" stroke-width="1.500"/><use href="#plus"/></symbol>
<symbol id="rem" viewBox="0 0 24 24"><path d="M2 2h17v18H2z" fill="#eee" stroke="#888" stroke-width="1.600"/><rect x="14" y="16" width="10" height="7" rx="2" fill="#e8474c"/><path d="M16 19.500h6" stroke="#fff" stroke-width="2"/></symbol>
<symbol id="float" viewBox="0 0 11 11"><rect x=".5" y=".5" width="10" height="10" rx="2" fill="#eee" stroke="#666"/><path d="M4.500 2.500h4v4h-4zM2.500 4.500h4v4h-4z" fill="#eee" stroke="#666"/></symbol>
<symbol id="x" viewBox="0 0 11 11"><rect x=".5" y=".5" width="10" height="10" rx="2" fill="#eee" stroke="#666"/><path d="M3 3l5 5M8 3l-5 5" stroke="#555" stroke-width="2"/></symbol>
<symbol id="clear" viewBox="0 0 13 10"><path d="M4 0h9v10H4L0 5z" fill="#8f8f8f"/><path d="M5.500 2.500l5 5M10.500 2.500l-5 5" stroke="#fff" stroke-width="1.200"/></symbol>
<symbol id="tick" viewBox="0 0 12 12"><path d="M2 6l3 4 5-8" fill="none" stroke="#000" stroke-width="2.100"/></symbol>
<symbol id="trans" viewBox="0 0 24 24"><path d="M2 2h22v14H2z" fill="url(#paleblue)"/><path d="M2 1v16" stroke="#eee" stroke-width="2"/><path d="M7 5l5 1-3 5zM13 4l8 1-2 6-3-3z" fill="#6f91b2"/><path d="M1 17h22M1 21h22" stroke="#eee"/><path d="M1 19h22" stroke="#222" stroke-width="2" stroke-dasharray="2 1"/></symbol>
<symbol id="hist" viewBox="0 0 24 24"><path d="M3 5h20v12H3z" fill="#e7e9eb"/><path d="M2 3v15h22" fill="none" stroke="#fff" stroke-width="2"/><path d="M5 13l4-4 4 5 3-2 5 4" fill="none" stroke="#58799e"/></symbol>
<symbol id="tree" viewBox="0 0 24 24"><path d="M6 16V7h12v9M12 6v10" fill="none" stroke="#c57d22" stroke-width="3"/><path d="M7 1h10v7H7z" fill="#e84b4b" stroke="#a33"/><path d="M1 17h9v6H1z" fill="#ffe04c" stroke="#b8922a"/><path d="M14 17h9v6h-9z" fill="#8dbbea" stroke="#4c78a8"/></symbol>
<symbol id="u2" viewBox="0 0 24 24"><path d="M2 11l9-8v5c9 0 12 7 5 13 2-5 0-7-5-7v5z" fill="#e8803c" stroke="#bd5a20"/></symbol>
<symbol id="r2" viewBox="0 0 24 24"><path d="M22 11l-9-8v5C4 8 1 15 8 21c-2-5 0-7 5-7v5z" fill="#79b37c" stroke="#4d8953"/></symbol>
</svg>

<header class="title"><svg class="logo"><use href="#q"/></svg><span>*Untitled Project — QGIS</span>
<svg class="winctl" viewBox="0 0 120 22"><path d="M3 11.500h10" stroke="#000"/><path d="M48.500 8.500h7v7h-7zM50.500 8.500v-2h7v7h-2" fill="none" stroke="#000"/><path d="M94.500 6l10 10M104.500 6l-10 10" stroke="#000" stroke-width="1.100"/></svg></header>
<nav class="menu"><span><u>P</u>roject</span><span><u>E</u>dit</span><span><u>V</u>iew</span><span><u>L</u>ayer</span><span><u>S</u>ettings</span><span><u>P</u>lugins</span><span>Vect<u>o</u>r</span><span><u>R</u>aster</span><span><u>D</u>atabase</span><span><u>W</u>eb</span><span><u>M</u>esh</span><span>Pro<u>c</u>essing</span><span><u>H</u>elp</span></nav>

<div class="bar"><b class="first"></b>
<svg><use href="#new"/></svg><svg><use href="#open"/></svg><svg><use href="#save"/></svg><svg><use href="#layout"/></svg><svg><use href="#layouts"/></svg><svg><use href="#style"/></svg><b></b>
<svg><use href="#hand"/></svg><svg><use href="#pansel"/></svg><svg class="on"><use href="#zin"/></svg><svg><use href="#zout"/></svg><svg><use href="#zfull"/></svg><svg class="off"><use href="#zsel"/></svg><svg><use href="#zsel"/></svg><svg><use href="#zone"/></svg><svg><use href="#zlast"/></svg><svg class="off"><use href="#znext"/></svg><svg><use href="#view"/></svg><svg><use href="#view3"/></svg><svg><use href="#mark"/></svg><svg><use href="#marks"/></svg><svg><use href="#clock"/></svg><svg><use href="#refresh"/></svg><b></b>
<svg><use href="#ident"/></svg><svg class="off"><use href="#attr"/></svg><svg class="half"><use href="#abacus"/></svg><svg><use href="#gear"/></svg><svg><use href="#sigma"/></svg><svg><use href="#measure"/></svg><i></i><svg><use href="#tip"/></svg><svg class="off"><use href="#action"/></svg><i class="off"></i><svg><use href="#text"/></svg><i></i></div>

<div class="bar"><b class="first"></b>
<svg><use href="#dsm"/></svg><svg><use href="#gpkgn"/></svg><svg><use href="#shpn"/></svg><svg><use href="#fean"/></svg><svg><use href="#chip"/></svg><em></em><svg><use href="#virtn"/></svg><em></em><b></b>
<svg class="off"><use href="#pencils"/></svg><svg class="off"><use href="#pencil"/></svg><svg class="off"><use href="#savee"/></svg><svg class="off"><use href="#addpoly"/></svg><svg class="off"><use href="#vertex"/></svg><i class="off"></i><svg class="off"><use href="#modify"/></svg><svg class="off"><use href="#bin"/></svg><svg class="off"><use href="#cut"/></svg><svg class="off"><use href="#copy"/></svg><svg class="off"><use href="#paste"/></svg><svg class="off"><use href="#undo"/></svg><svg class="off"><use href="#redo"/></svg><b></b>
<svg class="off"><use href="#tag"/></svg><svg class="off"><use href="#diag"/></svg><em></em><svg><use href="#tagb"/></svg><svg><use href="#tagred"/></svg><em></em><svg class="off"><use href="#tagp"/></svg><svg class="off"><use href="#tage"/></svg><svg class="off"><use href="#tagm"/></svg><svg class="off"><use href="#tagr"/></svg><svg class="off"><use href="#tagc"/></svg><b></b>
<svg><use href="#db"/></svg><b></b><svg><use href="#hex"/></svg><svg><use href="#globep"/></svg><svg><use href="#globes"/></svg><svg><use href="#binoc"/></svg><b></b><svg><use href="#help"/></svg><b></b><svg><use href="#topo"/></svg><svg><use href="#tabler"/></svg></div>

<div class="bar last"><b class="first"></b>
<svg class="off"><use href="#selrect"/></svg><i class="off"></i><svg class="off"><use href="#forms"/></svg><i class="off"></i><svg><use href="#desel"/></svg><i></i><svg><use href="#selloc"/></svg><b></b><svg><use href="#osm"/></svg>
<div class="ctl combo ghana">Ghana</div><div class="ctl search3">Search for...</div><b></b>
<svg><use href="#gsearch"/></svg><svg><use href="#osmap"/></svg><b></b>
<svg><use href="#py"/></svg><svg><use href="#fire"/></svg><svg><use href="#imp"/></svg><svg><use href="#swipe"/></svg><svg><use href="#leaf"/></svg><svg><use href="#earth"/></svg><svg><use href="#poly"/></svg><svg><use href="#gident"/></svg><b></b><b></b>
<svg><use href="#plot"/></svg><b></b><svg><use href="#river"/></svg><b></b>
<svg class="off"><use href="#split"/></svg><i class="off"></i><svg class="off"><use href="#splitn"/></svg><svg class="off"><use href="#bow"/></svg><svg class="off"><use href="#stitch"/></svg><svg class="off"><use href="#splitn"/></svg><svg class="off"><use href="#shape"/></svg><i class="off"></i><svg class="off"><use href="#shaped"/></svg><i class="off"></i><svg class="off"><use href="#shapen"/></svg><i class="off"></i><svg class="off"><use href="#pair"/></svg><i class="off"></i><svg class="off"><use href="#pair"/></svg><span class="more">»</span></div>

<main>
<aside class="rail"><span class="grip"></span>
<div><svg><use href="#shpa"/></svg></div><div><svg><use href="#rasta"/></svg></div><div><svg><use href="#mesh"/></svg></div><div><svg><use href="#comma"/></svg></div><div><svg><use href="#feaa"/></svg></div><div><svg><use href="#virta"/></svg></div><div><svg><use href="#eleph"/></svg><i></i></div><div><svg><use href="#spat"/></svg><i></i></div><div><svg><use href="#wms"/></svg></div><div><svg><use href="#wfs"/></svg><i></i></div><div><svg><use href="#gpkgn"/></svg><i></i></div></aside>

<section class="layers">
<div class="dock"><span>Layers</span><svg><use href="#float"/></svg><svg><use href="#x"/></svg></div>
<div class="ltools"><svg class="on"><use href="#brush"/></svg><svg><use href="#addgrp"/></svg><svg><use href="#eye"/></svg><svg><use href="#filter"/></svg><svg class="off"><use href="#eps"/></svg><i class="off"></i><svg><use href="#expand"/></svg><svg><use href="#collapse"/></svg><svg><use href="#rem"/></svg></div>
<div class="tree">
<div class="row"><s></s><q><svg><use href="#tick"/></svg></q><span class="sym"></span><span class="b">lagos_admin_boundary</span></div>
<div class="row"><s class="r"></s><q></q><svg class="ri"><use href="#rast"/></svg><span class="bi">HRSL_Lagos_Population</span></div>
<div class="row"><s class="r"></s><q></q><svg class="gi"><use href="#group"/></svg><span class="w">LandCover</span></div>
<div class="row"><s class="r"></s><q></q><svg class="gi"><use href="#group"/></svg><span class="w">SRTM-DEM</span></div>
<div class="row"><s class="r"></s><q></q><svg class="gi"><use href="#group"/></svg><span class="w">Reprojected</span></div>
<div class="row"><s class="d"></s><q><svg><use href="#tick"/></svg></q><svg class="gi"><use href="#group"/></svg><span class="w">Clipped</span></div>
<div class="row sub"><s></s><q></q><svg class="ri"><use href="#rast"/></svg><span class="bi">clipped_reprojected_LandCover_2019</span></div>
<div class="row sub"><s></s><q></q><svg class="ri"><use href="#rast"/></svg><span class="bi">clipped_reprojected_LandCover_2018</span></div>
<div class="row sub"><s></s><q></q><svg class="ri"><use href="#rast"/></svg><span class="bi">clipped_reprojected_LandCover_2017</span></div>
<div class="row sub"><s></s><q></q><svg class="ri"><use href="#rast"/></svg><span class="bi">clipped_reprojected_LandCover_2016</span></div>
<div class="row sub"><s></s><q></q><svg class="ri"><use href="#rast"/></svg><span class="bi">clipped_reprojected_LandCover_2015</span></div>
<div class="row sub"><s class="d"></s><q><svg><use href="#tick"/></svg></q><svg class="ri"><use href="#rast"/></svg><span class="b wide"><u>&lt;=50</u></span></div>
<div class="row cls"><span class="c c0"></span><span class="n hi">0.0000</span></div>
<div class="row cls"><span class="c c1"></span><span class="n">0.2500</span></div>
<div class="row cls"><span class="c c2"></span><span class="n">0.5000</span></div>
<div class="row cls"><span class="c c3"></span><span class="n">0.7500</span></div>
<div class="row cls"><span class="c c4"></span><span class="n">1.0000</span></div>
<div class="row sub"><s class="d"></s><q><svg><use href="#tick"/></svg></q><svg class="ri"><use href="#rast"/></svg><span class="b long">clipped_reprojected_merged_SRTM-DEM</span><svg class="mem" viewBox="0 0 16 16"><rect x=".5" y=".5" width="15" height="15" fill="#fafafa" stroke="#ddd"/><rect x="2.500" y="5.500" width="11" height="6" rx="1" fill="none" stroke="#888"/><path d="M4 4h9M4 13h9" stroke="#888" stroke-width="2" stroke-dasharray="1 1.500"/></svg></div>
<div class="row cls"><span class="c c0"></span><span class="n">-20.0000</span></div>
<div class="row cls"><span class="c c5"></span><span class="n">7.0000</span></div>
<div class="row cls"><span class="c c6"></span><span class="n">13.0000</span></div>
<div class="row cls"><span class="c c4"></span><span class="n">71.0000</span></div>
</div>
<div class="tabs"><span class="act">Layers</span><span>Layer Order</span><span>Browser</span></div>
</section>

<section class="canvas">
<svg viewBox="444 161 554 538">
<defs><filter id="rough" x="-5%" y="-5%" width="110%" height="110%"><feTurbulence type="fractalNoise" baseFrequency=".07" numOctaves="3" seed="4"/><feDisplacementMap in="SourceGraphic" scale="24" xChannelSelector="R" yChannelSelector="G"/></filter>
<path id="bound" d="M22 262l13-2 15 10h40l20-9 20 7 20 8 12-8 6-18h22l13-12-3-16-5-11 30-1 65 4 50 7 60 3 50-2 25-4 7-10 16-6v-27l-6-22 18-15 15-8 10-20 3-35 20-41 42 18 35 8 15 20 18 13 77 2-13-33 13 4 9-8-6-12h92l20 6 290 4 205 6 3 26-23 14-15 8-4 12 12 28 2 22 22 8 6 8 12-2 10-12 45-29 15 7 28 2 17 28-10 22-35 16-24 18 4 18 40 14 15 2 5 13 15 11 20-6 17 7 58-2 12 11v54l-82-10-100-15-100-20-140-21-100-4-70 10-130 6H700l-6 2-2 26-52-8-80-4-180 1-220 3-70 8-68 8z"/>
<clipPath id="inside"><use href="#bound"/></clipPath></defs>
<g transform="translate(450 365) scale(.33333)">
<use href="#bound" fill="#018571"/>
<g clip-path="url(#inside)"><g filter="url(#rough)">
<path d="M15 250h190v-5l-25 18-16 12-4 12-22-3-18-14-20 7-20 2-12-9-18 10-10-10-25-2z" fill="#fff"/>
<path d="M660 262l20-4 8-48 2-45 28 3 7-18 25-8 2-16 18 2v22l-12 20 7 18 40 10 15-4 20-9 20-17 45 5 25-13 35-30 28-20 27 4h85l40 6h40l30 31 50 1 35 18 52 6-22 15-30 2-20-8-15-20-55-6-30-32-30-2-40 14-72 4-13 38-10 18-50 4-35 14h-70l2 22-22 20-30 14-30 3-30-2-15-12-55 6z" fill="#fff"/>
<path d="M1168 221l72-3 40 14 20-4 50 14 8-27-8-30 10-70h150v160l-35 5-45 12-10 14h-50l-25-16-30-10-45-30-35-18-60 2z" fill="#fff"/>
<path d="M1345 276l25-4 42 3-2 21-26 8-22-14zM1428 294l22-6 26-6-2 17-25 6z" fill="#018571"/>
<path d="M1352 183l7 30-10 27-28-8 8-42z" fill="#018571"/>
<path d="M135 278l20 15 30 19 55 3h160l140 3 80-6 30-14 30-4M495 270l40 28 70-2 60-8M662 262l28 22 4 45-50-10M680 276l20 14 30-2 12-14M1420 306l50 2 30 6 25 16" fill="none" stroke="#fff" stroke-width="6"/>
<path d="M554 44l46 16 2 16-14-4-2 8-10-6-3 14-8-8-18 6 4-12-8-8zM830 47h24l2 6h-26zM870 52h40l-2 14-12-6-6 6-8-8zM985 54l24 2-12 14-10-4zM1248 56l10 2-2 8z" fill="#a6611a"/>
</g>
<path d="M546 86h3M552 78h3M615 78h3M617 98h3M622 104h3M630 66h3M799 80h3M844 86h3M1024 76h3M1260 74h3M1274 79h3M780 48h8M792 48h12M808 48h10" stroke="#a6611a" stroke-width="4"/>
<path d="M345 246h3M382 233h3M395 262h3M450 256h3M458 240h3M468 262h3M472 240h3M490 252h3M588 220h3M568 242h6M564 245h3M600 258h3M625 236h3M630 256h3M624 244h3M670 160h3M690 110h3M698 126h3M705 104h3M715 100h3M712 120h3M722 118h3M728 110h3M738 102h3M742 125h3M755 85h3M760 100h3M702 140h3M718 132h3M736 120h3M40 290h3M56 300h3M80 294h3M82 308h3M118 292h3M122 300h3M402 290h3M430 282h3M452 274h3M475 300h3M405 300h3M460 306h3M520 302h3M540 292h3M570 298h3M618 290h3M645 284h3M862 220h3M868 226h3M876 234h3M888 245h3M914 246h3M926 238h3M934 250h3M945 248h3M953 240h3M925 262h3M970 295h3M1000 294h3M1064 154h3M1062 150h3M1100 268h3M1111 256h3M1116 108h3M1134 280h3M1145 278h3M1156 282h3M1270 273h3M1272 285h3M1273 275h3M1462 326h3M1480 322h3M1490 330h3" stroke="#fff" stroke-width="3.500"/>
<path d="M40 292h6M310 312h8M360 310h9M404 303h4M430 308h30M490 306h22M550 308h40M560 290h20M610 300h22" stroke="#fff" stroke-width="3"/>
<path d="M1468 172l8-4-2 8M1440 220l-22 16" fill="none" stroke="#018571" stroke-width="5"/></g>
<use href="#bound" fill="none" stroke="#d5c82e" stroke-width="3.200"/>
</g></svg></section>

<section class="styling">
<div class="dock"><span>Layer Styling</span><svg><use href="#float"/></svg><svg><use href="#x"/></svg></div>
<div class="ctl combo top"><svg class="ri"><use href="#rast"/></svg><span>&lt;=50</span></div>
<div class="body">
<div class="side"><div class="sel"><svg><use href="#brush2"/></svg></div><svg><use href="#trans"/></svg><svg><use href="#hist"/></svg><svg><use href="#tree"/></svg><svg viewBox="0 0 24 24"><use href="#r2" x="0" y="0" width="15" height="15"/><use href="#u2" x="9" y="7" width="15" height="15"/></svg></div>
<div class="pane">
<div class="scroll"><div class="form">
<div class="ctl combo band0"><svg viewBox="0 0 12 12"><path d="M.5.500h11v11H.5z" fill="url(#ramp5)" stroke="#555"/></svg><span>Singleband pseudocolor</span></div>
<div class="line l1"><label>Band</label><div class="ctl combo">Band 1 (Gray)</div></div>
<div class="line l2"><label>Min</label><div class="ctl">0</div><label class="mx">Max</label><div class="ctl">1</div></div>
<div class="fold"><s></s><span>Min / Max Value Settings</span></div>
<div class="line l3"><label>Interpolation</label><div class="ctl combo">Linear</div></div>
<div class="line l3"><label>Color ramp</label><div class="ctl ramp"><span></span></div><div class="ctl rb"><i></i></div></div>
<div class="line l3"><label>Label unit suffix</label><div class="ctl"></div></div>
<div class="line l3"><label>Label precision</label><div class="ctl spin"><span>4</span><svg class="clr"><use href="#clear"/></svg><em></em></div></div>
<div class="table"><div class="th"><span>Value</span><span>Color</span><span>Label</span></div>
<div class="tr"><span>0</span><span class="c c0"></span><span>0.0000</span></div>
<div class="tr"><span>0.25</span><span class="c c1"></span><span>0.2500</span></div>
<div class="tr"><span>0.5</span><span class="c c2"></span><span>0.5000</span></div>
<div class="tr"><span>0.75</span><span class="c c3"></span><span>0.7500</span></div>
<div class="tr"><span>1</span><span class="c c4"></span><span>1.0000</span></div></div>
</div><div class="sb"><span class="up"></span><span class="thumb"></span><span class="dn"></span></div></div>
<div class="foot"><div class="ctl"><svg><use href="#u2"/></svg></div><div class="ctl"><svg><use href="#r2"/></svg></div><q><svg><use href="#tick"/></svg></q><span>Live update</span><div class="ctl apply">Apply</div></div>
</div></div></section>
</main>

<footer class="status">
<div class="ctl find"><svg class="mag" viewBox="0 0 12 12"><circle cx="5" cy="5" r="4" fill="none" stroke="#999" stroke-width="1.200"/><path d="M8 8l3.500 3.500" stroke="#999" stroke-width="1.600"/></svg><span>warp</span><svg class="clr"><use href="#clear"/></svg></div>
<span class="msg">1 legend entries removed.</span><span class="prog"></span>
<span class="lc">Coordinate</span><div class="ctl co">134204,190965</div>
<svg class="mouse" viewBox="0 0 16 16"><path d="M4 3l8 11M2 7l6 8M8 1l5 8" stroke="#555" stroke-width="2.500"/><circle cx="5" cy="4" r="3" fill="#eee" stroke="#333"/><circle cx="10" cy="11" r="3.500" fill="#ccc" stroke="#333"/><path d="M12 1l3 2M1 12l3 3" stroke="#333"/></svg>
<span class="lsc">Scale</span><div class="ctl sc"><span>1:1307031</span><em><i></i></em></div>
<svg class="lock" viewBox="0 0 12 15"><path d="M3 7V4q0-3 3-3t3 3v3" fill="none" stroke="#999" stroke-width="1.600"/><rect x=".5" y="7" width="11" height="8" rx="1" fill="#555"/></svg>
<span class="lm">Magnifier</span><div class="ctl spin mg"><span>100%</span><em></em></div>
<span class="lr">Rotation</span><div class="ctl spin ro"><span>0.0 °</span><em></em></div>
<q><svg><use href="#tick"/></svg></q><span class="lre">Render</span>
<svg class="gl" viewBox="0 0 14 14"><circle cx="7" cy="7" r="5.500" fill="#bbb" stroke="#666"/><ellipse cx="7" cy="7" rx="2.500" ry="5.500" fill="none" stroke="#666"/><path d="M7 0v14M0 5h14M0 9h14" stroke="#666"/></svg><span class="ep">EPSG:26392</span>
<svg class="bub" viewBox="0 0 16 16"><path d="M8 1c10 0 10 11 2 11l-4 4v-4C-2 11-2 1 8 1z" fill="#555"/><path d="M3.500 6.500h2M7 6.500h2M10.500 6.500h2" stroke="#eee" stroke-width="2"/></svg>
</footer>
</body>
</html>
```
FILE: styles.css
```css
* { box-sizing: border-box; }
body { margin: 0; width: 1364px; height: 728px; overflow: hidden; display: flex; flex-direction: column; background: #f0f0f0; color: #000; font: 12px/18px "Open Sans", "Noto Sans", sans-serif; letter-spacing: -.35px; white-space: nowrap; }
svg, i, b, em, s, q { flex: none; display: block; }
q::before, q::after { content: none; }
.defs { position: absolute; width: 0; height: 0; }
.abc { font: bold 8px "DejaVu Sans", sans-serif; letter-spacing: -.3px; }

.title { height: 23px; background: #fff; display: flex; align-items: center; }
.logo { width: 16px; height: 16px; margin-right: 5px; }
.winctl { width: 120px; height: 22px; margin-left: auto; margin-right: 4px; }
.menu { height: 20px; border-bottom: 1px solid #ddd; display: flex; align-items: center; padding-left: 8px; gap: 13.750px; }
.menu u, .b u { text-underline-offset: 2px; }

.bar { height: 39px; border-bottom: 1px solid #b4b4b4; background: linear-gradient(#fafafa, #ededed); display: flex; align-items: center; }
.bar.last { height: 38px; padding-bottom: 0; }
.bar > svg { width: 33px; height: 24px; padding: 0 4.500px; }
.bar > svg.on { height: 31px; border: 1px solid #aaa; border-radius: 3px; background: #dcdcdc; padding: 3px 3.500px; }
.bar b { width: 16px; height: 18px; background: radial-gradient(circle at 1px 1px, #b5b5b5 .8px, transparent 1px) 9px 0 / 4px 3px repeat-y; }
.bar b::after { content: ""; display: block; width: 3px; height: 18px; margin-left: 12px; background: radial-gradient(circle at 1px 1px, #b5b5b5 .8px, transparent 1px) 0 0 / 4px 3px repeat-y; }
.bar b.first { width: 10px; background-position: 3px 0; }
.bar b.first::after { margin-left: 6px; }
.bar em { width: 7px; height: 20px; border-right: 1px solid #c8c8c8; transform: translateX(-2px); }
.off { opacity: .38; filter: grayscale(.75); }
.half { opacity: .6; }
i { width: 12px; height: 4px; background: #555; clip-path: polygon(1.500px 0, 9.500px 0, 5.500px 4px); }
.bar i.off { background: #444; opacity: .6; }

.ctl { border: 1px solid #b0b0b0; border-radius: 3px; background: #fff; height: 22px; display: flex; align-items: center; padding: 0 3px; font-family: "DejaVu Sans Condensed", "DejaVu Sans", sans-serif; font-stretch: condensed; font-size: 11px; letter-spacing: -.3px; }
.combo { background: linear-gradient(#fff, #ededed); }
.combo::after { content: ""; width: 8px; height: 4px; margin-left: auto; margin-right: 4px; background: #555; clip-path: polygon(0 0, 100% 0, 50% 100%); }
.ghana { width: 87px; margin-left: 1px; }
.search3 { width: 109px; margin-left: 1px; color: #777; padding-left: 1px; margin-right: -1px; letter-spacing: 0; }
.more { margin-left: auto; margin-right: 4px; font: bold 15px/20px "Liberation Sans", sans-serif; }

main { height: 541px; display: flex; }
.rail { width: 51px; border-right: 2px solid #b4b4b4; background: linear-gradient(90deg, #fafafa, #ececec); padding-top: 7px; }
.grip { display: block; width: 17px; height: 6px; margin-left: 17px; background: radial-gradient(circle at 1px 1px, #b5b5b5 .8px, transparent 1px) 0 0 / 3px 4px; }
.rail div { height: 32px; display: flex; align-items: center; gap: 4px; padding-left: 6px; }
.rail svg { width: 24px; height: 24px; }

.layers { width: 386px; display: flex; flex-direction: column; }
.dock { height: 22px; display: flex; align-items: center; gap: 3px; padding: 0 2px 0 3px; }
.dock span { margin-right: auto; }
.dock svg { width: 11px; height: 11px; }
.ltools { height: 29px; display: flex; align-items: center; padding: 0 0 3px 3px; gap: 9px; }
.ltools svg { width: 16px; height: 16px; }
.ltools svg.on { width: 24px; height: 24px; padding: 3px; border: 1px solid #aaa; border-radius: 3px; background: #dcdcdc; margin-right: -4px; }
.ltools i { margin: 0 -2px 0 -5px; width: 11px; }
.tree { height: 465px; border: 1px solid #b0b0b0; border-left: 0; background: #fff; padding-top: 1px; }
.row { height: 18px; display: flex; align-items: center; padding-left: 6px; }
.row s { width: 18px; height: 8px; }
.row s.r { width: 5px; margin-left: 2px; margin-right: 11px; background: #555; clip-path: polygon(0 0, 100% 50%, 0 100%); }
.row s.d { height: 4px; width: 8px; margin-right: 10px; background: #555; clip-path: polygon(0 0, 100% 0, 50% 100%); }
.row.sub { padding-left: 26px; }
q { width: 14px; height: 14px; border: 1px solid #bbb; background: #fff; }
q svg { width: 12px; height: 12px; }
.row q { margin-right: 7px; }
.row s { margin-right: -1px; }
.row s.r { margin-right: 10px; }
.row s.d { margin-right: 9px; }
.ri, .gi, .sym { width: 14px; height: 13px; margin-right: 7px; }
.row .gi { height: 15px; }
.row .sym { width: 16px; height: 16px; border: 1px solid #ece59a; margin: 0 6px 0 -1px; }
.b, .bi { font-weight: 700; letter-spacing: -.4px; font-size: 11.500px; }
.bi { font-style: italic; color: #777; letter-spacing: .220px; }
.b.long { letter-spacing: .04px; }
.b.wide { letter-spacing: .8px; }
.row .mem { width: 17px; height: 16px; margin-left: auto; margin-right: 4px; }
.row.cls { padding-left: 63px; }
.cls .c { width: 16px; height: 16px; margin-right: 3px; }
.n { flex: 1; padding-left: 2px; height: 18px; line-height: 16px; letter-spacing: -.75px; border: 1px solid transparent; }
.n.hi { background: linear-gradient(#fafdff, #eaf4fc); border: 1px solid #b8d9f1; }
.c0 { background: #a6611a; } .c1 { background: #dfc27d; } .c2 { background: #f5f5f5; } .c3 { background: #80cdc1; } .c4 { background: #018571; } .c5 { background: #e8d4a9; } .c6 { background: #a8dbd3; }
.tabs { display: flex; height: 23px; align-items: flex-start; border-top: 1px solid #b0b0b0; margin-top: 1px; font: 11px/19px "DejaVu Sans Condensed", sans-serif; font-stretch: condensed; letter-spacing: -.05px; }
.tabs span { height: 20px; border: 1px solid #b4b4b4; border-top: 0; border-left: 0; background: #dedede; text-align: center; width: 62px; border-radius: 0 0 3px 3px; padding-right: 2px; }
.tabs span:nth-child(2) { width: 82px; }
.tabs .act { width: 56px; height: 22px; line-height: 21px; background: #f6f6f6; }

.canvas { width: 556px; margin: 1px 0 0 6px; height: 540px; border: 1px solid #b0b0b0; background: #fff; }
.canvas svg { width: 554px; height: 538px; }
.styling { width: 356px; margin-left: 9px; display: flex; flex-direction: column; font: 11px/18px "DejaVu Sans Condensed", "DejaVu Sans", sans-serif; font-stretch: condensed; letter-spacing: -.3px; }
.styling .dock { height: 23px; padding: 0 2px 1px 1px; }
.styling .dock span { font: 12px/18px "Open Sans", sans-serif; letter-spacing: -.35px; }
.top { width: 353px; height: 25px; padding-left: 7px; }
.top .ri { margin-right: 4px; }
.body { display: flex; height: 490px; }
.side { width: 38px; background: #5d5d5d; display: flex; flex-direction: column; align-items: center; gap: 8px; }
.side > svg { width: 24px; height: 24px; margin-right: 6px; }
.side .sel { background: #f0f0f0; width: 38px; height: 37px; margin-bottom: -2px; padding: 10px 0 0 6px; }
.sel svg { width: 24px; height: 22px; }
.pane { width: 318px; }
.scroll { height: 462px; display: flex; padding-top: 4px; }
.form { width: 301px; padding: 10px 0 0 12px; overflow: hidden; }
.band0 { width: 280px; height: 24px; padding-left: 6px; }
.band0 svg { width: 12px; height: 12px; margin-right: 5px; }
.line { display: flex; align-items: center; }
.l1 { margin: 9px 0 6px 2px; width: 275px; }
.l1 label, .l2 label { width: 31px; }
.l1 .ctl { flex: 1; }
.l2 { margin-left: 2px; }
.l2 .ctl { width: 106px; }
.l2 .mx { width: 27px; margin-left: 5px; }
.fold { display: flex; height: 34px; align-items: center; font-weight: 700; font-size: 11.500px; padding-bottom: 6px; letter-spacing: -.15px; }
.fold s { width: 7px; height: 11px; background: #333; clip-path: polygon(0 0, 100% 50%, 0 100%); margin: 0 10px 0 7px; }
.l3 { margin-left: 5px; height: 28px; padding-bottom: 6px; width: 269px; letter-spacing: -.15px; }
.l3 label { width: 94px; }
.l3 .ctl { flex: 1; }
.l3 .ramp { padding: 3px; }
.ramp span { flex: 1; height: 16px; background: linear-gradient(90deg, #a6611a, #dfc27d 25%, #f5f5f5 50%, #80cdc1 75%, #018571); }
.l3 .rb { flex: none; width: 13px; padding: 0; margin-left: 1px; }
.rb i { width: 10px; }
.spin em, .sc em { margin-left: auto; }
.spin { padding-right: 0; }
.spin em { width: 15px; height: 20px; border-left: 1px solid #b0b0b0; background: #f6f6f6; border-radius: 0 3px 3px 0; padding: 4px 3px; }
.spin em::before, .spin em::after { content: ""; display: block; width: 8px; height: 4px; background: #555; clip-path: polygon(50% 0, 100% 100%, 0 100%); margin-bottom: 4px; }
.spin em::after { clip-path: polygon(0 0, 100% 0, 50% 100%); }
.clr { width: 13px; height: 10px; margin-left: auto; }
.clr + em { margin-left: 10px; }
.table { width: 268px; height: 230px; margin: 0 0 0 6px; border: 1px solid #b0b0b0; background: #fff; }
.th { display: flex; height: 19px; background: linear-gradient(#fff, #f0f0f0); border-bottom: 1px solid #b0b0b0; font: 12px/18px "Open Sans", sans-serif; letter-spacing: -.45px; }
.th span { width: 100px; padding-left: 2px; border-right: 1px solid #c8c8c8; }
.th span + span { width: 59px; }
.th span:last-child { border: 0; }
.tr { height: 44px; display: flex; align-items: center; font: 12px/18px "Open Sans", sans-serif; letter-spacing: -.75px; }
.tr span:first-child { width: 108px; padding-left: 23px; }
.tr .c { width: 42px; height: 42px; border-radius: 7px; margin-right: 12px; }
.tr span:last-child { color: #a5a5a5; }
.sb { width: 15px; height: 457px; border-left: 1px solid #b0b0b0; border-right: 1px solid #ddd; background: #e3e3e3; display: flex; flex-direction: column; }
.sb span { background: #f5f5f5; border-bottom: 1px solid #b0b0b0; height: 14px; }
.sb .thumb { height: 189px; background: linear-gradient(90deg, #fff, #f0f0f0); }
.sb .dn { margin-top: auto; border: 0; border-top: 1px solid #b0b0b0; }
.sb .up::after, .sb .dn::after { content: ""; display: block; margin: 5px 0 0 3px; width: 7px; height: 4px; background: #555; clip-path: polygon(50% 0, 100% 100%, 0 100%); }
.sb .dn::after { clip-path: polygon(0 0, 100% 0, 50% 100%); }
.foot { display: flex; align-items: center; height: 28px; padding: 5px 0 0 3px; }
.foot > .ctl { width: 24px; height: 24px; background: linear-gradient(#fff, #f0f0f0); margin-right: 6px; padding: 4px; }
.foot .ctl svg { width: 14px; height: 14px; }
.foot q { margin: 0 4px 0 85px; }
.foot > .apply { width: 80px; justify-content: center; height: 22px; margin-left: auto; margin-right: 3px; }

.status { flex: 1; display: flex; align-items: center; padding: 0 7px 0 2px; font: 11px/18px "DejaVu Sans Condensed", "DejaVu Sans", sans-serif; font-stretch: condensed; letter-spacing: -.3px; }
.find { width: 200px; padding: 0 8px; }
.mag { width: 12px; height: 12px; margin-right: 7px; }
.msg { width: 180px; padding-left: 8px; }
.prog { width: 170px; height: 13px; border: 1px solid #1c5f9c; border-radius: 2px; background: repeating-linear-gradient(120deg, #0f8cf0 0 12px, #0a82e6 12px 24px); }
.lc { width: 70px; padding-left: 13px; letter-spacing: -.1px; } .co { width: 91px; padding-left: 6px; }
.mouse { width: 16px; height: 16px; margin: 0 12px 0 4px; }
.lsc { width: 30px; } .sc { width: 80px; padding-right: 0; }
.sc em { width: 20px; height: 20px; border-left: 1px solid #b0b0b0; padding: 8px 0 0 4px; background: #f6f6f6; }
.lock { width: 12px; height: 15px; margin: 0 8px 0 12px; }
.lm { width: 48px; } .mg { width: 88px; }
.lr { width: 60px; padding-left: 8px; letter-spacing: -.1px; } .ro { width: 83px; }
.status q { margin: 0 4px 0 6px; } .lre { width: 54px; }
.gl { width: 14px; height: 14px; margin-right: 4px; }
.bub { width: 16px; height: 16px; margin-left: auto; }
```
